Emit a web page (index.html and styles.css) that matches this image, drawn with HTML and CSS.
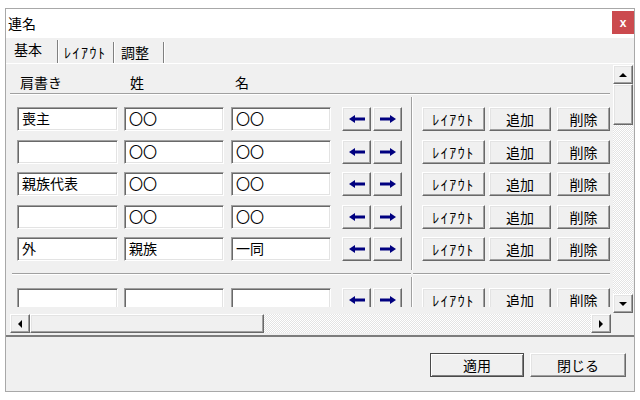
FILE: index.html
```html
<!DOCTYPE html>
<html lang="ja">
<head>
  <meta charset="UTF-8">
  <meta name="viewport" content="width=device-width, initial-scale=1.0">
  <title>連名</title>
  <link rel="stylesheet" href="styles.css">
</head>
<body>
  <div class="window">
    <div class="titlebar">
      <span class="title">連名</span>
      <button class="close">x</button>
    </div>
    <div class="tabs">
      <div class="tab tab1 active">基本</div>
      <div class="tab tab2"><span class="hk">ﾚｲｱｳﾄ</span></div>
      <div class="tab tab3">調整</div>
    </div>
    <div class="page">
      <div class="scroller">
        <div class="view">
          <div class="canvas">
            <div class="head">
              <span class="h1">肩書き</span>
              <span class="h2">姓</span>
              <span class="h3">名</span>
            </div>
            <div class="hline"></div>

            <div class="block">
              <div class="left">
                <div class="row">
                  <div class="tb t1">喪主</div><div class="tb t2">〇〇</div><div class="tb t3">〇〇</div>
                  <button class="btn arrow a1"><svg width="16" height="8" viewBox="0 0 16 8"><polygon points="0,4 6,0 6,2.5 16,2.5 16,5.5 6,5.5 6,8" fill="#000080"/></svg></button>
                  <button class="btn arrow a2"><svg width="16" height="8" viewBox="0 0 16 8"><polygon points="16,4 10,0 10,2.5 0,2.5 0,5.5 10,5.5 10,8" fill="#000080"/></svg></button>
                </div>
                <div class="row">
                  <div class="tb t1"></div><div class="tb t2">〇〇</div><div class="tb t3">〇〇</div>
                  <button class="btn arrow a1"><svg width="16" height="8" viewBox="0 0 16 8"><polygon points="0,4 6,0 6,2.5 16,2.5 16,5.5 6,5.5 6,8" fill="#000080"/></svg></button>
                  <button class="btn arrow a2"><svg width="16" height="8" viewBox="0 0 16 8"><polygon points="16,4 10,0 10,2.5 0,2.5 0,5.5 10,5.5 10,8" fill="#000080"/></svg></button>
                </div>
                <div class="row">
                  <div class="tb t1">親族代表</div><div class="tb t2">〇〇</div><div class="tb t3">〇〇</div>
                  <button class="btn arrow a1"><svg width="16" height="8" viewBox="0 0 16 8"><polygon points="0,4 6,0 6,2.5 16,2.5 16,5.5 6,5.5 6,8" fill="#000080"/></svg></button>
                  <button class="btn arrow a2"><svg width="16" height="8" viewBox="0 0 16 8"><polygon points="16,4 10,0 10,2.5 0,2.5 0,5.5 10,5.5 10,8" fill="#000080"/></svg></button>
                </div>
                <div class="row">
                  <div class="tb t1"></div><div class="tb t2">〇〇</div><div class="tb t3">〇〇</div>
                  <button class="btn arrow a1"><svg width="16" height="8" viewBox="0 0 16 8"><polygon points="0,4 6,0 6,2.5 16,2.5 16,5.5 6,5.5 6,8" fill="#000080"/></svg></button>
                  <button class="btn arrow a2"><svg width="16" height="8" viewBox="0 0 16 8"><polygon points="16,4 10,0 10,2.5 0,2.5 0,5.5 10,5.5 10,8" fill="#000080"/></svg></button>
                </div>
                <div class="row">
                  <div class="tb t1">外</div><div class="tb t2">親族</div><div class="tb t3">一同</div>
                  <button class="btn arrow a1"><svg width="16" height="8" viewBox="0 0 16 8"><polygon points="0,4 6,0 6,2.5 16,2.5 16,5.5 6,5.5 6,8" fill="#000080"/></svg></button>
                  <button class="btn arrow a2"><svg width="16" height="8" viewBox="0 0 16 8"><polygon points="16,4 10,0 10,2.5 0,2.5 0,5.5 10,5.5 10,8" fill="#000080"/></svg></button>
                </div>
              </div>
              <div class="vline"></div>
              <div class="right">
                <div class="row"><button class="btn b1"><span class="hk">ﾚｲｱｳﾄ</span></button><button class="btn b2">追加</button><button class="btn b3">削除</button></div>
                <div class="row"><button class="btn b1"><span class="hk">ﾚｲｱｳﾄ</span></button><button class="btn b2">追加</button><button class="btn b3">削除</button></div>
                <div class="row"><button class="btn b1"><span class="hk">ﾚｲｱｳﾄ</span></button><button class="btn b2">追加</button><button class="btn b3">削除</button></div>
                <div class="row"><button class="btn b1"><span class="hk">ﾚｲｱｳﾄ</span></button><button class="btn b2">追加</button><button class="btn b3">削除</button></div>
                <div class="row"><button class="btn b1"><span class="hk">ﾚｲｱｳﾄ</span></button><button class="btn b2">追加</button><button class="btn b3">削除</button></div>
              </div>
            </div>

            <div class="block second">
              <div class="left">
                <div class="row">
                  <div class="tb t1"></div><div class="tb t2"></div><div class="tb t3"></div>
                  <button class="btn arrow a1"><svg width="16" height="8" viewBox="0 0 16 8"><polygon points="0,4 6,0 6,2.5 16,2.5 16,5.5 6,5.5 6,8" fill="#000080"/></svg></button>
                  <button class="btn arrow a2"><svg width="16" height="8" viewBox="0 0 16 8"><polygon points="16,4 10,0 10,2.5 0,2.5 0,5.5 10,5.5 10,8" fill="#000080"/></svg></button>
                </div>
              </div>
              <div class="vline"></div>
              <div class="right">
                <div class="row"><button class="btn b1"><span class="hk">ﾚｲｱｳﾄ</span></button><button class="btn b2">追加</button><button class="btn b3">削除</button></div>
              </div>
            </div>
          </div>
        </div>

        <div class="vscroll">
          <div class="sbtn"><span class="tri up"></span></div>
          <div class="thumb vthumb"></div>
          <div class="track"></div>
          <div class="sbtn"><span class="tri down"></span></div>
        </div>
        <div class="hscroll">
          <div class="bar">
            <div class="sbtn hb"><span class="tri lt"></span></div>
            <div class="thumb hthumb"></div>
            <div class="track"></div>
            <div class="sbtn hb"><span class="tri rt"></span></div>
          </div>
        </div>
        <div class="corner"></div>
      </div>
    </div>
    <div class="foot">
      <button class="btn fbtn default">適用</button>
      <button class="btn fbtn close-btn">閉じる</button>
    </div>
  </div>
</body>
</html>
```

FILE: styles.css
```css
html, body{
  margin: 0;
  padding: 0;
  background: #fff;
}
body{
  font-family: "Noto Sans CJK JP", "Liberation Sans", sans-serif;
  font-size: 14px;
  color: #000;
}

.window{
  width: 630px;
  height: 384px;
  margin: 8px 0 0 5px;
  border: 1px solid #a8a8a8;
  box-sizing: border-box;
  background: #f0f0f0;
  display: flex;
  flex-direction: column;
}

/* title */
.titlebar{
  height: 29px;
  background: #fff;
  display: flex;
  align-items: flex-start;
  flex-shrink: 0;
}
.title{
  padding-left: 2px;
  line-height: 29px;
}
.close{
  margin: 2px 0 0 auto;
  width: 22px;
  height: 23px;
  border: 0;
  padding: 0;
  background: #cb4a4e;
  color: #fff;
  font-family: "Liberation Sans", sans-serif;
  font-weight: bold;
  font-size: 12px;
  line-height: 20px;
}

/* tabs */
.tabs{
  height: 25px;
  display: flex;
  flex-shrink: 0;
}
.tab{
  box-sizing: border-box;
  margin-top: 4px;
  height: 21px;
  padding-top: 1px;
  line-height: 18px;
  border-right: 1px solid #808080;
  box-shadow: 1px 0 0 #fff;
}
.tab.active{
  margin-top: 2px;
  height: 23px;
  padding-top: 0;
}
.tab1{ width: 52px; padding-left: 8px; }
.tab2{ width: 56px; padding-left: 6px; }
.tab3{ width: 50px; padding-left: 7px; }
.hk{
  letter-spacing: 1.5px;
}

/* page with scroll area */
.page{
  border-top: 1px solid #fff;
  border-bottom: 2px solid #7c7c7c;
  padding-left: 3px;
  flex-shrink: 0;
}
.scroller{
  display: grid;
  grid-template-columns: 603px 22px;
  grid-template-rows: 249px 22px;
}
.view{
  overflow: hidden;
}
.canvas{
  height: 243px;
  overflow: hidden;
}
.head{
  height: 29px;
  box-sizing: border-box;
  padding: 10px 0 0 11px;
  line-height: 16px;
  display: flex;
}
.h1{ width: 110px; }
.h2{ width: 105px; }
.hline{
  height: 2px;
  margin: 0 2px 0 1px;
  background: linear-gradient(#a0a0a0 50%, #fff 50%);
}

.block{
  display: flex;
}
.left{
  width: 399px;
  margin-left: 3px;
  box-sizing: border-box;
  padding: 12px 0 12px 5px;
  display: flex;
  flex-direction: column;
  gap: 8.5px;
}
.right{
  width: 197px;
  box-sizing: border-box;
  padding: 12px 0 12px 9px;
  display: flex;
  flex-direction: column;
  gap: 8.5px;
}
.vline{
  width: 2px;
  margin: 2px 0 3px;
  background: linear-gradient(to right, #a0a0a0 50%, #fff 50%);
}
.second .left, .second .right{
  border-top: 1px solid #a0a0a0;
  box-shadow: inset 0 1px 0 #fff;
  padding-top: 14px;
}
.second .vline{
  margin-top: 4px;
}

.row{
  display: flex;
  height: 24px;
  flex-shrink: 0;
}

/* sunken text box */
.tb{
  box-sizing: border-box;
  height: 24px;
  background: #fff;
  border: 1px solid;
  border-color: #a0a0a0 #fff #fff #a0a0a0;
  box-shadow: inset 1px 1px 0 #696969, inset -1px -1px 0 #e3e3e3;
  padding-left: 4px;
  line-height: 20px;
  white-space: nowrap;
}
.t1{ width: 101px; }
.t2{ width: 100px; margin-left: 6px; }
.t3{ width: 100px; margin-left: 7px; }

/* raised button */
.btn{
  box-sizing: border-box;
  height: 24px;
  padding: 0;
  background: #f0f0f0;
  border: 1px solid;
  border-color: #fff #696969 #696969 #fff;
  box-shadow: inset -1px -1px 0 #a0a0a0, inset 1px 1px 0 #e3e3e3;
  font-family: inherit;
  font-size: 14px;
  color: #000;
  line-height: 20px;
  white-space: nowrap;
}
.arrow{
  width: 29px;
  display: flex;
  align-items: center;
  justify-content: center;
}
.a1{ margin-left: 11px; }
.a2{ margin-left: 2px; }
.b1{ width: 63px; }
.b2{ width: 62px; margin-left: 4px; }
.b3{ width: 53px; margin-left: 6px; }

/* scrollbars */
.track{
  flex: 1;
  background: repeating-conic-gradient(#e3e3e3 0 25%, #fff 0 50%) 0 0 / 2px 2px;
}
.sbtn, .thumb{
  box-sizing: border-box;
  background: #f0f0f0;
  border: 1px solid;
  border-color: #fff #696969 #696969 #fff;
  box-shadow: inset -1px -1px 0 #a0a0a0, inset 1px 1px 0 #e3e3e3;
  display: flex;
  align-items: center;
  justify-content: center;
}
.vscroll{
  padding: 1px 1px 0 1px;
  display: flex;
  flex-direction: column;
}
.vscroll .sbtn{ height: 19px; }
.vthumb{ height: 41px; }
.hscroll{
  padding: 1px 1px 0 1px;
}
.bar{
  height: 19px;
  display: flex;
}
.hb{ width: 20px; }
.hthumb{ width: 234px; }
.tri{
  width: 0;
  height: 0;
  border: 4px solid transparent;
}
.tri.up{ border-bottom-color: #000; border-top-width: 0; }
.tri.down{ border-top-color: #000; border-bottom-width: 0; }
.tri.lt{ border-right-color: #000; border-left-width: 0; }
.tri.rt{ border-left-color: #000; border-right-width: 0; }

/* footer */
.foot{
  flex: 1;
  display: flex;
  justify-content: flex-end;
  align-items: flex-start;
  gap: 6px;
  padding: 16px 8px 0 0;
}
.fbtn{
  height: 24px;
}
.default{
  width: 94px;
  border-color: #4a4a4a;
  box-shadow: inset 1px 1px 0 #fff, inset -1px -1px 0 #808080;
}
.close-btn{
  width: 96px;
}
```
